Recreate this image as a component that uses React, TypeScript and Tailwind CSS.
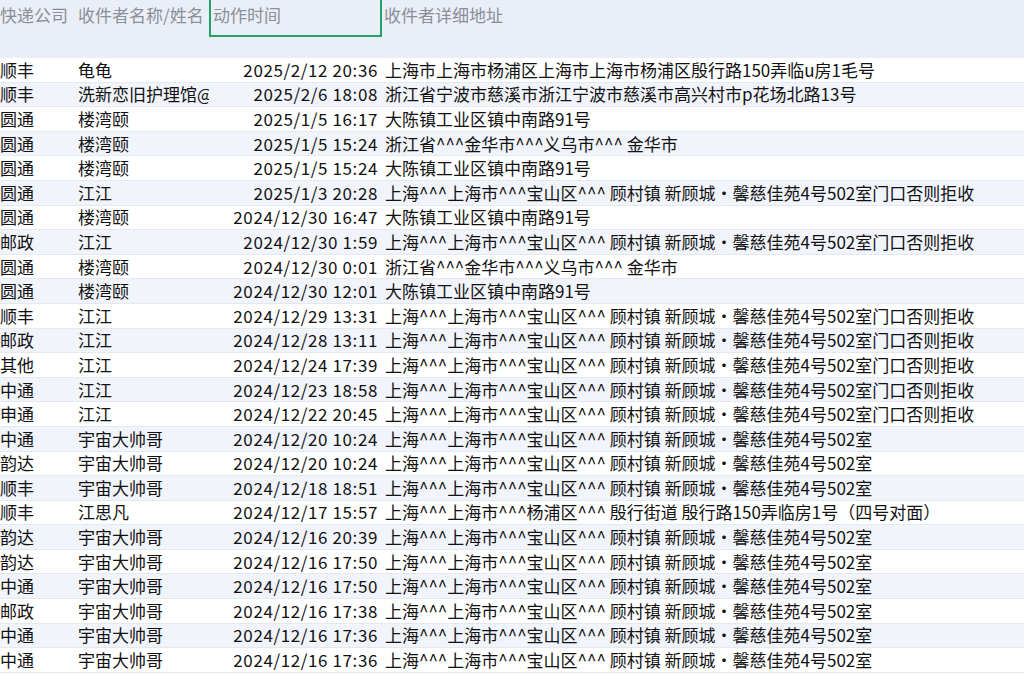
const ROWS: [string, string, string, string][] = [
  ["顺丰", "龟龟", "2025/2/12 20:36", "上海市上海市杨浦区上海市上海市杨浦区殷行路150弄临u房1毛号"],
  ["顺丰", "洗新恋旧护理馆@", "2025/2/6 18:08", "浙江省宁波市慈溪市浙江宁波市慈溪市高兴村市p花场北路13号"],
  ["圆通", "楼湾颐", "2025/1/5 16:17", "大陈镇工业区镇中南路91号"],
  ["圆通", "楼湾颐", "2025/1/5 15:24", "浙江省^^^金华市^^^义乌市^^^ 金华市"],
  ["圆通", "楼湾颐", "2025/1/5 15:24", "大陈镇工业区镇中南路91号"],
  ["圆通", "江江", "2025/1/3 20:28", "上海^^^上海市^^^宝山区^^^ 顾村镇 新顾城·馨慈佳苑4号502室门口否则拒收"],
  ["圆通", "楼湾颐", "2024/12/30 16:47", "大陈镇工业区镇中南路91号"],
  ["邮政", "江江", "2024/12/30 1:59", "上海^^^上海市^^^宝山区^^^ 顾村镇 新顾城·馨慈佳苑4号502室门口否则拒收"],
  ["圆通", "楼湾颐", "2024/12/30 0:01", "浙江省^^^金华市^^^义乌市^^^ 金华市"],
  ["圆通", "楼湾颐", "2024/12/30 12:01", "大陈镇工业区镇中南路91号"],
  ["顺丰", "江江", "2024/12/29 13:31", "上海^^^上海市^^^宝山区^^^ 顾村镇 新顾城·馨慈佳苑4号502室门口否则拒收"],
  ["邮政", "江江", "2024/12/28 13:11", "上海^^^上海市^^^宝山区^^^ 顾村镇 新顾城·馨慈佳苑4号502室门口否则拒收"],
  ["其他", "江江", "2024/12/24 17:39", "上海^^^上海市^^^宝山区^^^ 顾村镇 新顾城·馨慈佳苑4号502室门口否则拒收"],
  ["中通", "江江", "2024/12/23 18:58", "上海^^^上海市^^^宝山区^^^ 顾村镇 新顾城·馨慈佳苑4号502室门口否则拒收"],
  ["申通", "江江", "2024/12/22 20:45", "上海^^^上海市^^^宝山区^^^ 顾村镇 新顾城·馨慈佳苑4号502室门口否则拒收"],
  ["中通", "宇宙大帅哥", "2024/12/20 10:24", "上海^^^上海市^^^宝山区^^^ 顾村镇 新顾城·馨慈佳苑4号502室"],
  ["韵达", "宇宙大帅哥", "2024/12/20 10:24", "上海^^^上海市^^^宝山区^^^ 顾村镇 新顾城·馨慈佳苑4号502室"],
  ["顺丰", "宇宙大帅哥", "2024/12/18 18:51", "上海^^^上海市^^^宝山区^^^ 顾村镇 新顾城·馨慈佳苑4号502室"],
  ["顺丰", "江思凡", "2024/12/17 15:57", "上海^^^上海市^^^杨浦区^^^ 殷行街道 殷行路150弄临房1号（四号对面）"],
  ["韵达", "宇宙大帅哥", "2024/12/16 20:39", "上海^^^上海市^^^宝山区^^^ 顾村镇 新顾城·馨慈佳苑4号502室"],
  ["韵达", "宇宙大帅哥", "2024/12/16 17:50", "上海^^^上海市^^^宝山区^^^ 顾村镇 新顾城·馨慈佳苑4号502室"],
  ["中通", "宇宙大帅哥", "2024/12/16 17:50", "上海^^^上海市^^^宝山区^^^ 顾村镇 新顾城·馨慈佳苑4号502室"],
  ["邮政", "宇宙大帅哥", "2024/12/16 17:38", "上海^^^上海市^^^宝山区^^^ 顾村镇 新顾城·馨慈佳苑4号502室"],
  ["中通", "宇宙大帅哥", "2024/12/16 17:36", "上海^^^上海市^^^宝山区^^^ 顾村镇 新顾城·馨慈佳苑4号502室"],
  ["中通", "宇宙大帅哥", "2024/12/16 17:36", "上海^^^上海市^^^宝山区^^^ 顾村镇 新顾城·馨慈佳苑4号502室"],
];

export default function App() {
  return (
    <div className="w-[1024px] h-[676px] overflow-hidden bg-white text-[17px] text-[#111]" style={{ fontFamily: '"Noto Sans CJK SC", "Noto Sans", sans-serif' }}>
      {/* filter header */}
      <div className="h-[58px] bg-[#e9eef7] flex items-start text-[#8a8f99]">
        <div className="w-[78px] shrink-0 pt-[2px] whitespace-nowrap">快递公司</div>
        <div className="w-[131px] shrink-0 pt-[2px] whitespace-nowrap overflow-hidden">收件者名称/姓名</div>
        <div className="w-[173px] shrink-0 h-[37px] border-x-2 border-b-2 border-[#21a366] pl-[2px] pt-[2px]">动作时间</div>
        <div className="pl-[2px] pt-[2px]">收件者详细地址</div>
      </div>
      {ROWS.map((r, i) => (
        <div key={i} className={`h-[24.6px] flex items-center whitespace-nowrap border-b border-[#e3e8f1] leading-[22px] ${i % 2 ? "bg-[#f1f4fb]" : "bg-white"}`}>
          <div className="w-[78px] shrink-0">{r[0]}</div>
          <div className="w-[131px] shrink-0 overflow-hidden">{r[1]}</div>
          <div className="w-[169px] shrink-0 text-right tracking-[0.6px]">{r[2]}</div>
          <div className="pl-[7px]">{r[3]}</div>
        </div>
      ))}
    </div>
  );
}
